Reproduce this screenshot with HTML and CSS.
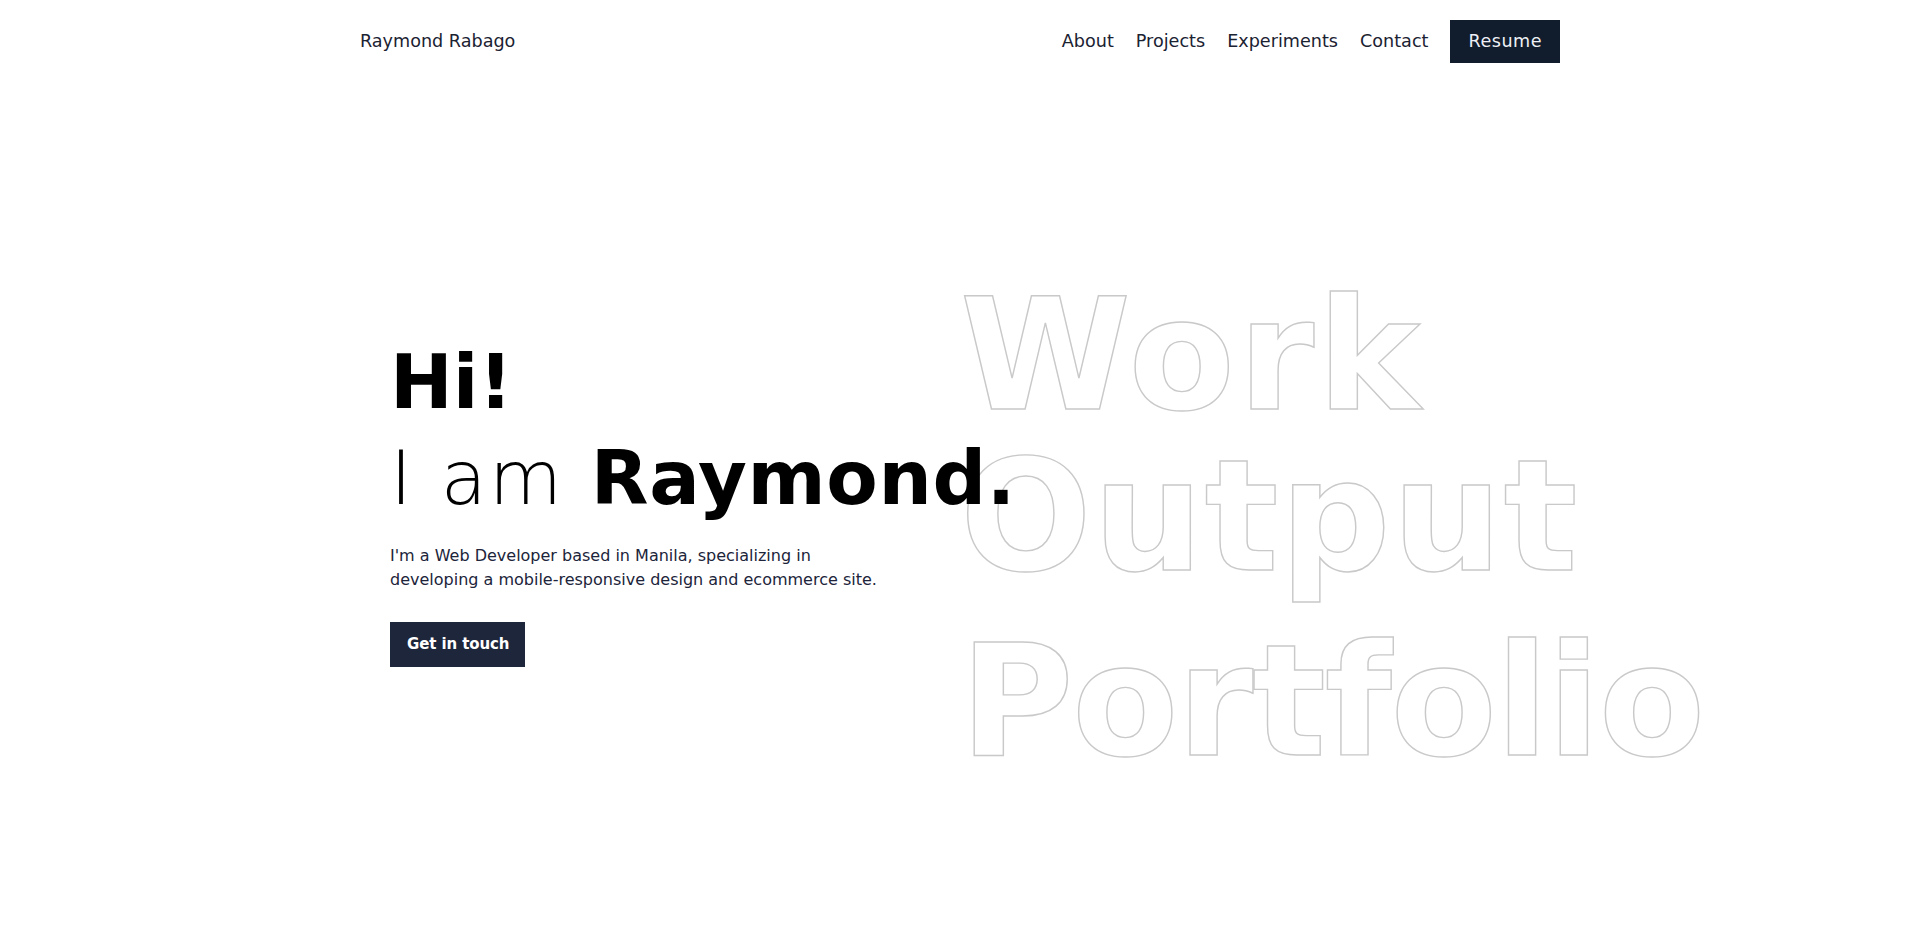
FILE: index.html
```html
<!DOCTYPE html>
<html lang="en">
<head>
<meta charset="utf-8">
<title>Raymond Rabago</title>
<link rel="stylesheet" href="styles.css">
</head>
<body>
<header class="nav">
  <a class="brand" href="#">Raymond Rabago</a>
  <nav class="links">
    <a href="#">About</a>
    <a href="#">Projects</a>
    <a href="#">Experiments</a>
    <a href="#">Contact</a>
    <a class="resume" href="#">Resume</a>
  </nav>
</header>
<main class="hero">
  <section class="intro">
    <h1 class="headline"><strong>Hi!</strong><br><span class="light">I am </span><strong class="name">Raymond.</strong></h1>
    <p class="lead">I'm a Web Developer based in Manila, specializing in developing a mobile-responsive design and ecommerce site.</p>
    <a class="cta" href="#">Get in touch</a>
  </section>
  <div class="outline" aria-hidden="true">
    <div class="word word-work">Work</div>
    <div class="word word-output">Output</div>
    <div class="word word-portfolio">Portfolio</div>
  </div>
</main>
</body>
</html>
```

FILE: styles.css
```css
* { box-sizing: border-box; }
html, body { margin: 0; padding: 0; background: #ffffff; }
body {
  font-family: "DejaVu Sans", "Liberation Sans", sans-serif;
  color: #1b2232;
  overflow: hidden;
  height: 937px;
}
a { text-decoration: none; color: inherit; }

.nav {
  width: 1200px;
  margin: 0 auto;
  padding-top: 20px;
  display: flex;
  justify-content: space-between;
  align-items: center;
}
.brand {
  font-size: 17.6px;
  color: #1b2232;
  line-height: 43px;
}
.links {
  display: flex;
  align-items: center;
  gap: 22px;
  font-size: 17.6px;
  color: #1b2232;
}
.links a { line-height: 43px; }
.resume {
  background: #111c2c;
  color: #eef0f5;
  height: 43px;
  padding: 0 18px;
  letter-spacing: 0.5px;
  display: block;
}

.hero {
  width: 1200px;
  margin: 0 auto;
  padding-left: 30px;
  display: flex;
  align-items: flex-start;
}
.intro {
  width: 570px;
  flex-shrink: 0;
  margin-top: 271px;
  position: relative;
  z-index: 2;
}
.headline {
  margin: 0;
  font-size: 75px;
  line-height: 96px;
  font-weight: 700;
  color: #000;
  white-space: nowrap;
}
.headline strong { font-weight: 700; }
.light { font-weight: 200; letter-spacing: 2.4px; }
.name { letter-spacing: 0.6px; }
.lead {
  margin: 18px 0 0;
  max-width: 505px;
  font-size: 16px;
  line-height: 24px;
  color: #20243a;
}
.cta {
  display: inline-block;
  margin-top: 30px;
  background: #1e263b;
  color: #ffffff;
  font-weight: 700;
  font-size: 15px;
  letter-spacing: -0.1px;
  height: 45px;
  line-height: 45px;
  padding: 0 16px 0 17px;
}

.outline {
  margin-top: 212px;
  position: relative;
  z-index: 1;
  font-family: "DejaVu Sans", "Liberation Sans", sans-serif;
  font-weight: 700;
  font-size: 155px;
  line-height: 161px;
  color: transparent;
  -webkit-text-stroke: 1.4px #c9c9c9;
  white-space: nowrap;
}
.word-work { letter-spacing: 3px; }
.word-output { letter-spacing: 1.2px; }
.word-portfolio { margin-top: 24px; letter-spacing: -1.5px; }
```
